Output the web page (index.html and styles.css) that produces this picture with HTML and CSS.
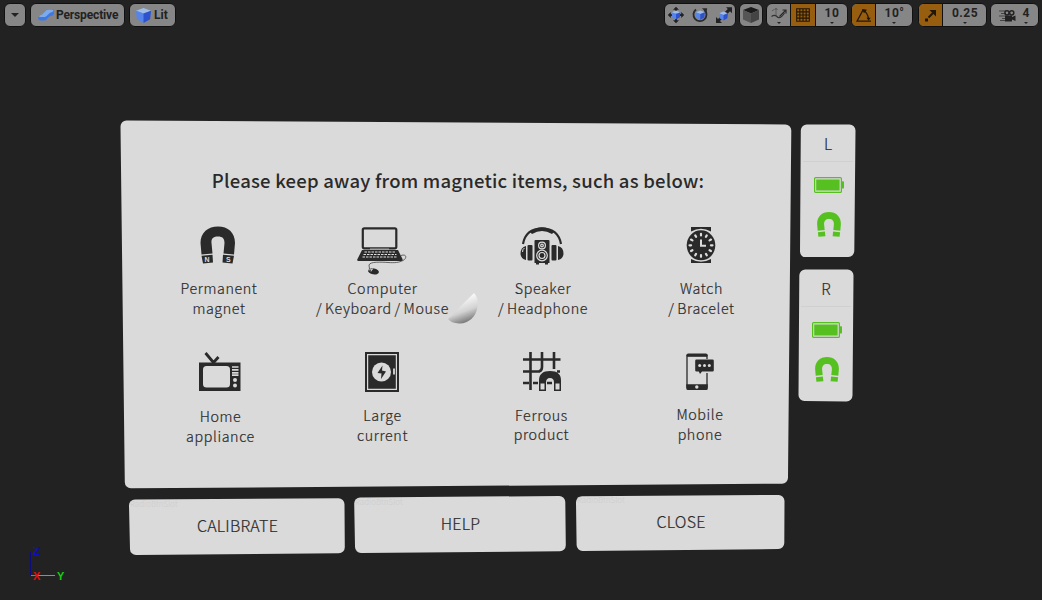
FILE: index.html
```html
<!DOCTYPE html>
<html lang="en">
<head>
<meta charset="utf-8">
<title>Viewport</title>
<link rel="stylesheet" href="styles.css">
</head>
<body>
<svg class="defs" aria-hidden="true">
  <defs>
    <linearGradient id="ball" x1="0.35" y1="0.25" x2="0.62" y2="1"><stop offset="0" stop-color="#f6f6f6"/><stop offset="0.5" stop-color="#d2d2d2"/><stop offset="1" stop-color="#6e6e6e"/></linearGradient>
    <symbol id="cube" viewBox="0 0 18 18"><path d="M1 4 9 1l8 3-8 3z" fill="#9dbdea"/><path d="M1 4l8 3v10l-7-4z" fill="#5684ea"/><path d="M17 4 9 7v10l7-4z" fill="#2d52d0"/></symbol>
    <symbol id="battery" viewBox="0 0 30 16"><rect x=".6" y=".6" width="26.8" height="14.8" rx="1" fill="none" stroke="#57c021" stroke-width="1.2"/><path d="M2.2 2.4h23.4v11.2H2.2zM28 4.3h1.2q.8 0 .8.8v5.6q0 .8-.8.8H28z" fill="#57c021"/></symbol>
    <symbol id="magnet" viewBox="0 0 24 25"><path d="M.7 18.8.1 12C0 4.6 5 .1 12 .1S24 4.6 23.9 12l-.6 6.800-7-.700.6-5.600c.2-3.600-1.600-5.600-4.900-5.600s-5.100 2-4.900 5.600l.6 5.600zM.9 20.200l7-.700.5 4.700-7 .600zM23.100 20.200l-7-.700-.5 4.700 7 .600z" fill="#57c021"/></symbol>
  </defs>
</svg>
<main class="viewport">
  <header class="toolbar">
    <div class="group menu"><span class="caret big"></span></div>
    <div class="group view"><svg width="18" height="14" viewBox="0 0 18 14"><path d="M1 9.500 5.500 6 9 2.500Q10 1 12 1h3q2 .3 2 2.500v2q-.3 2-3 2.500-2 .2-3 1.800Q9.500 12.500 7 12.500H4Q1 12.500 1 9.500z" fill="#3f78e2"/><path d="M2 8.500Q3 7 5 6.500l4-4Q10 1.400 12 1.400h3q1.500.5 1.500 1.600-1 1.300-3.500 1.700L9.500 8 8 9H3z" fill="#7faaea"/></svg><span>Perspective</span></div>
    <div class="group lit"><svg width="17" height="17"><use href="#cube"/></svg><span>Lit</span></div>
    <div class="spacer"></div>
    <div class="group tools">
      <svg width="18" height="18" viewBox="0 0 18 18"><path d="M9 .8l3 3H10v10.400h2l-3 3-3-3h2V3.800H6zM.8 9l3-3v2h10.400V6l3 3-3 3v-2H3.800v2z" fill="#222"/><svg x="4" y="4" width="10" height="10"><use href="#cube"/></svg></svg>
      <svg width="18" height="18" viewBox="0 0 18 18"><path d="M5 3.500A6.500 6.500 0 1 0 13.500 4" fill="none" stroke="#2a2a2a" stroke-width="1.800"/><path d="M11 2.200h5.200L15.400 7z" fill="#2a2a2a"/><svg x="4" y="4" width="10.500" height="10.500"><use href="#cube"/></svg></svg>
      <svg width="18" height="18" viewBox="0 0 18 18"><path d="M11 1.200H17v6l-2-2-3 3-2.200-2.200 3-3zM1 11v6h6l-2-2 2-2-2-2-2 2z" fill="#222"/><svg x="3.500" y="5" width="10" height="10"><use href="#cube"/></svg></svg>
    </div>
    <div class="group box"><svg width="18" height="18" viewBox="0 0 18 18"><path d="M1 4l8-3 8 3-8 3.500z" fill="#1b1b1b"/><path d="M1 4l8 3.500V17l-8-3.500z" fill="#555"/><path d="M17 4 9 7.500V17l8-3.500z" fill="#444"/></svg></div>
    <div class="group grid-snap">
      <div class="cell surface"><svg width="16" height="13" viewBox="0 0 16 13"><path d="M.5 9.500q3.500-2.500 6.500 1 3 1 6.500-4.500" fill="none" stroke="#333" stroke-width="1.200"/><path d="M5 8V1.500M3.500 3 5 1l1.500 2M1 4l2-1.500" fill="none" stroke="#5c5c5c"/><path d="M8.500 9.500 14.500 3.500M11.500 3H15v3.500" fill="none" stroke="#2a2a2a" stroke-width="1.200"/></svg><i class="caret"></i></div>
      <div class="cell on"><svg width="14" height="14" viewBox="0 0 14 14"><path d="M.7.700h12.600v12.600H.7zM3.850.7v12.600M7 .7v12.600M10.150.7v12.600M.7 3.850h12.600M.7 7h12.600M.7 10.150h12.600" fill="none" stroke="#221604" stroke-width="1.100"/></svg></div>
      <div class="cell value"><b>10</b><i class="caret"></i></div>
    </div>
    <div class="group rot">
      <div class="cell on"><svg width="16" height="15" viewBox="0 0 16 15"><path d="M7 2 1 13.200h14M7 2q5 3 5.500 9" fill="none" stroke="#221604" stroke-width="1.300"/><path d="M6 1l5 .8-3 3.400zM10.500 9.800h4.200l-2.100 3z" fill="#221604"/></svg></div>
      <div class="cell value"><b>10°</b><i class="caret"></i></div>
    </div>
    <div class="group scale">
      <div class="cell on"><svg width="13" height="13" viewBox="0 0 13 13"><path d="M1 9.500h3v3H1z" fill="#221604"/><path d="M4.500 8.500 9 4" stroke="#221604" stroke-width="2"/><path d="M5.500 1H12v6.500z" fill="#221604"/></svg></div>
      <div class="cell value"><b>0.25</b><i class="caret"></i></div>
    </div>
    <div class="group cam">
      <svg width="17" height="13" viewBox="0 0 17 13"><path d="M0 2h7M2 4.500h5M0 7h6M3 9.500h4M1 11.500h5" stroke="#444" stroke-width="1"/><path d="M6 6.500h7v1.500l3.500-1.500v5.500L13 10.500V12.500H6z" fill="#222"/><circle cx="8" cy="3.800" r="2.100" fill="none" stroke="#222" stroke-width="1.500"/><circle cx="12.700" cy="3.800" r="2.100" fill="none" stroke="#222" stroke-width="1.500"/></svg>
      <div class="value"><b>4</b><i class="caret"></i></div>
    </div>
  </header>

  <div class="scene">
    <div class="left">
      <section class="panel">
        <svg class="plate" viewBox="0 0 672 369"><path d="M6.500 6.500 665.300 10.500 662 357.700 10.800 362.300z"/></svg>
        <h1>Please keep away from magnetic items, such as below:</h1>
        <div class="row first">
          <figure class="f1">
            <svg width="36" height="40" viewBox="0 0 36 40"><path d="M1.500 28.500.5 17C.5 6.500 8 .5 18 .5S35 6.500 35 17l-1 11.500-10.500-1L24.500 17c0-4.500-2-6.500-6.500-6.500S11 12.500 11.500 17l1 10.500zM1.500 29.700l11-.9.500 7.700-10 1zM34 29.700l-11-.9-.5 7.700 10 1z" fill="#2a2a2a"/><text x="4.500" y="36">N</text><text x="26" y="36">S</text></svg>
            <figcaption>Permanent<br>magnet</figcaption>
          </figure>
          <figure>
            <svg class="laptop" width="52" height="50" viewBox="0 0 52 50"><rect x="6.800" y="2.300" width="33.500" height="20" rx="1.500" fill="none" stroke="#2a2a2a" stroke-width="2.200"/><path d="M6 24h36l4.500 9q.5 2-1 2h-43q-2 0-1-2z" fill="#2a2a2a"/><path d="M8.500 26h31M7.500 28.500h33M6.500 31h35" stroke="#ddd" stroke-width="1.200" stroke-dasharray="2.500 1"/><path d="M14 23h19" stroke="#ddd" stroke-width=".7"/><path d="M45 29.500c6-2 6 3 2 5s-8 2.500-15 2-18-1-19 2.500l.5 4" fill="none" stroke="#444" stroke-width=".8"/><ellipse cx="17.500" cy="45.500" rx="5.500" ry="3" transform="rotate(10 18 45.500)" fill="#2a2a2a"/><path d="M12.500 44l4-.500M16.500 42.500l-1.500 3" stroke="#ddd" stroke-width=".8"/></svg>
            <figcaption>Computer<br>/ Keyboard / Mouse</figcaption>
          </figure>
          <figure class="f3">
            <svg width="44" height="40" viewBox="0 0 44 40"><path d="M3 18C5 7 12 2.500 22 2.500S39 7 41 18" fill="none" stroke="#2a2a2a" stroke-width="2.200"/><path d="M10 6Q22-3.500 34 6l-2 2Q22 2 12 8z" fill="#2a2a2a"/><rect x="7.500" y="19" width="5" height="15.500" rx="1" fill="#2a2a2a"/><rect x="31.500" y="19" width="5" height="15.500" rx="1" fill="#2a2a2a"/><path d="M6 20v14q-5-1-5.500-6 0-7 5.500-8zM38 20v14q5-1 5.500-6 0-7-5.500-8z" fill="#2a2a2a"/><path d="M4.500 22q-2 1-2 4" fill="none" stroke="#ddd"/><path d="M15.500 14h13q1 0 1 1v22h-1.500v1.500h-3V37h-6v1.500h-3V37h-1.500V15q0-1 1-1z" fill="#2a2a2a"/><g fill="none" stroke="#ddd" stroke-width="1.200"><circle cx="22" cy="19.500" r="3.400"/><circle cx="22" cy="19.500" r="1.300"/><circle cx="22" cy="29.500" r="5.300"/><circle cx="22" cy="29.500" r="3"/></g></svg>
            <figcaption>Speaker<br>/ Headphone</figcaption>
          </figure>
          <figure>
            <svg width="30" height="40" viewBox="0 0 30 40"><path d="M5 1h20V5.500Q15 0 5 5.500zM5 37h20V33Q15 38.500 5 33z" fill="#2a2a2a"/><ellipse cx="15" cy="19.300" rx="14.300" ry="15" fill="#2a2a2a"/><g stroke="#ddd" stroke-width="2.200" stroke-linecap="round"><path id="tick" d="M15 7.800v1.600M15 29.200v1.600M3.500 19.300h1.600M24.900 19.300h1.600"/><use href="#tick" transform="rotate(30 15 19.300)"/><use href="#tick" transform="rotate(60 15 19.300)"/></g><path d="M15 13.500v6.300h5" fill="none" stroke="#ddd" stroke-width="2"/></svg>
            <figcaption>Watch<br>/ Bracelet</figcaption>
          </figure>
        </div>
        <div class="row second">
          <figure class="d1">
            <svg width="42" height="40" viewBox="0 0 42 40"><path d="M6.500 1l8 9.500 5-5.500" fill="none" stroke="#2a2a2a" stroke-width="2.800"/><path d="M0 10.500h41.500V39H0z" fill="#2a2a2a"/><rect x="4" y="14" width="27" height="21.500" rx="3.500" fill="#dadada"/><path d="M33 15h6.500M33 17.900h6.500M33 20.800h6.500M33 23.200h6.500" stroke="#dadada" stroke-width="1.700"/><circle cx="36" cy="28" r="2" fill="#dadada"/><circle cx="36" cy="33.500" r="2" fill="#dadada"/></svg>
            <figcaption>Home<br>appliance</figcaption>
          </figure>
          <figure class="d2">
            <svg width="34" height="40" viewBox="0 0 34 40"><path d="M0 0h34v40H0z" fill="#2a2a2a"/><path d="M2.600 2.700h28.800v34.600H2.600z" fill="none" stroke="#dadada" stroke-width="1.200"/><circle cx="16.500" cy="20" r="9.500" fill="#dadada"/><path d="M17.500 13.500 12.500 21l4 .5-.5 5.500 5-7.500-4-1z" fill="#2a2a2a"/><path d="M29 16.500v6" stroke="#dadada" stroke-width="1.800"/></svg>
            <figcaption>Large<br>current</figcaption>
          </figure>
          <figure class="d3">
            <svg width="38" height="40" viewBox="0 0 38 40"><path d="M7.500 0v38M19 0v15q0 3.500-3 4.500M31 0v17M0 7.500h37.500M0 19.500h17M34 19.500h3M0 31h6M10 31h5M24 31h5" fill="none" stroke="#2a2a2a" stroke-width="2.600"/><path d="M16 39V28.500q0-9.500 11-9.500T38 28.500v10.500h-7V30.500q0-4.500-4-4.500t-4 4.500v8.500z" fill="#2a2a2a"/><path d="M17.500 31.500h4v6h-4zM32.500 31.500h4v6h-4z" fill="#dadada"/></svg>
            <figcaption>Ferrous<br>product</figcaption>
          </figure>
          <figure class="d4">
            <svg width="28" height="40" viewBox="0 0 28 40"><path d="M1 4h20v31H1z" fill="#dadada" stroke="#2a2a2a" stroke-width="1.300"/><path d="M.3 3.500q0-2 2-2h17.500q2 0 2 2V4.200H.3zM.3 32.300h21.500v4.200q0 1.500-1.500 1.500H2q-1.700 0-1.700-1.500z" fill="#2a2a2a"/><circle cx="10.800" cy="35" r="1.700" fill="#dadada"/><path d="M8.500 7h20v14H8.500z" fill="#dadada"/><path d="M10.500 7.500H26.500q1.300 0 1.300 1.300v9.400q0 1.300-1.300 1.300H16L14 22l-1.200-2.500H10.500q-1.300 0-1.300-1.300V8.800q0-1.300 1.300-1.300z" fill="#2a2a2a"/><g fill="#dadada"><circle cx="13.700" cy="13.500" r="1.500"/><circle cx="18.500" cy="13.500" r="1.500"/><circle cx="23.300" cy="13.500" r="1.500"/></g></svg>
            <figcaption>Mobile<br>phone</figcaption>
          </figure>
        </div>
      </section>
      <div class="actions">
        <button class="b1"><svg class="plate" viewBox="0 0 216 60"><path d="M6 10.500 209.500 9.200 209.800 52.300 7 54z"/></svg><small>RadioBtnSlot</small><span>CALIBRATE</span></button>
        <button class="b2"><svg class="plate" viewBox="0 0 212 60"><path d="M6.200 8.500 205.300 7 205.800 50.300 7 52z"/></svg><small>RadioBtnSlot</small><span>HELP</span></button>
        <button class="b3"><svg class="plate" viewBox="0 0 209 60"><path d="M6 7.200 202.500 6 202.300 48 6.600 50z"/></svg><small>RadioBtnSlot</small><span>CLOSE</span></button>
      </div>
    </div>
    <aside class="right">
      <section class="hand">
        <svg class="plate" viewBox="0 0 56 133"><path d="M6.800 6.500 49.500 6.500 48.300 127 6 127.500z"/></svg>
        <h2>L</h2>
        <svg class="bat" width="30" height="16"><use href="#battery"/></svg>
        <svg class="mag" width="24" height="25"><use href="#magnet"/></svg>
      </section>
      <section class="hand r">
        <svg class="plate" viewBox="0 0 56 133"><path d="M7.300 6.500 49.500 6.500 48.500 126.500 6.500 126z"/></svg>
        <h2>R</h2>
        <svg class="bat" width="30" height="16"><use href="#battery"/></svg>
        <svg class="mag" width="24" height="25"><use href="#magnet"/></svg>
      </section>
    </aside>
  </div>

  <svg class="pointer" width="32" height="34" viewBox="0 0 32 34"><path d="M27 1Q31.500 5 30.500 15C29 25 21 32 12 31.500Q4 31 1 27z" fill="url(#ball)"/></svg>
  <svg class="axes" width="44" height="42" viewBox="0 0 44 42"><path d="M1.500 12v23" stroke="#0c0c7c"/><path d="M2 35.500h24" stroke="#18e018"/><path d="M2 35.500h8" stroke="#c86a18"/><text x="4" y="15" fill="#0d0dc8">Z</text><text x="4" y="40" fill="#e01010">X</text><text x="28" y="40" fill="#12d012">Y</text></svg>
</main>
</body>
</html>
```

FILE: styles.css
```css
* { box-sizing: border-box; }
body { margin: 0; background: #222; overflow: hidden; }
.defs { position: absolute; width: 0; height: 0; }
.viewport { position: relative; width: 1042px; height: 600px; background: #222; color: #2a2a2a; font-family: "Noto Sans CJK SC", "Noto Sans", sans-serif; }

.toolbar { display: flex; height: 30px; padding: 3px 3px 0 4px; font: 500 12px Roboto, sans-serif; color: #222; }
.group { display: flex; align-items: center; height: 24px; border: 1px solid #111; border-radius: 6px; background: #868686; overflow: hidden; flex: none; }
.menu { width: 22px; justify-content: center; margin-right: 4px; }
.view { width: 95px; padding-left: 6px; gap: 1px; margin-right: 4px; font-weight: 700; letter-spacing: -.15px; }
.lit { width: 47px; padding-left: 5px; gap: 2px; font-weight: 700; }
.spacer { flex: 1; }
.tools { width: 72px; padding: 0 1px; justify-content: space-between; margin-right: 3px; }
.tools > svg { margin: 0 1px; }
.box { width: 24px; justify-content: center; margin-right: 3px; }
.grid-snap { width: 82px; margin-right: 3px; }
.rot { width: 62px; margin-right: 5px; }
.scale { width: 69px; margin-right: 3px; }
.cam { width: 49px; padding: 0 8px; justify-content: space-between; }
.cell { display: flex; align-items: center; justify-content: center; height: 22px; width: 24px; }
.surface { flex-direction: column; width: 23px; gap: 2px; padding-top: 1px; }
.on { background: #985e10; border-right: 1px solid #111; }
.surface + .on { width: 26px; border-left: 1px solid #111; }
.value { display: flex; flex: 1; flex-direction: column; align-items: center; }
.cam .value { flex: none; }
.value b { font-size: 12px; line-height: 14px; letter-spacing: .5px; padding-left: 1px; margin-bottom: 2px; }
.caret { width: 0; height: 0; border: solid transparent; border-width: 2px 2px 0; border-top-color: #222; }
.caret.big { border-width: 4px 4px 0; border-top-color: #222; }

.scene { display: flex; padding: 90px 0 0 120px; }
.left { width: 672px; margin-right: 8px; }
.plate { position: absolute; inset: 0; width: 100%; height: 100%; z-index: -1; }
.plate path { fill: #dadada; stroke: #dadada; stroke-width: 12px; stroke-linejoin: round; }
.panel, .hand, .actions button { position: relative; z-index: 0; }
.panel { height: 369px; padding-top: 48px; }
h1 { margin: 0; padding-left: 4px; height: 25px; line-height: 25px; font-size: 18.5px; font-weight: 500; letter-spacing: .22px; text-align: center; white-space: nowrap; }
.row { display: grid; }
.first { grid-template-columns: 161px 166px 155px 162px; padding: 33px 0 0 18px; height: 158px; }
.second { grid-template-columns: 160px 164px 155px 162px; padding: 0 0 0 20px; }
figure { margin: 0; display: flex; flex-direction: column; align-items: center; }
figure svg { display: block; flex: none; }
figure text { font: 700 7px "Liberation Sans", sans-serif; fill: #ddd; }
.f1 > svg, .f3 > svg { margin-right: 2px; }
.laptop { margin: 0 1px -10px 0; }
figcaption { margin-top: 12px; padding-left: 1px; text-align: center; white-space: nowrap; font-size: 14.3px; font-weight: 300; -webkit-text-stroke: .2px #2a2a2a; line-height: 19.6px; letter-spacing: .6px; word-spacing: -1px; }
.second figure { padding-top: 1px; }
.second figcaption { margin-top: 13.4px; }
.second .d1 figcaption { margin-top: 14.4px; }
.second .d3 figcaption { margin-top: 12.8px; padding-left: 0; }
.second .d4 figcaption { margin-top: 12.3px; padding-left: 0; }

.actions { display: grid; grid-template-columns: 216px 212px 209px; column-gap: 9.500px; padding: 6px 0 0 9px; }
.actions button { height: 60px; padding: 0; border: 0; background: none; color: inherit; font: 300 16px "Noto Sans CJK SC", sans-serif; display: flex; flex-direction: column; align-items: center; }
.actions .b2 { margin-left: -.5px; margin-right: .5px; }
.actions small { align-self: flex-start; font-size: 8px; line-height: 10px; color: #cdcdcd; margin: 4px 0 0 1px; }
.actions span { line-height: 24px; margin-top: 4px; padding-left: 1px; letter-spacing: .2px; -webkit-text-stroke: .2px #2a2a2a; }
.actions .b2 small { margin-top: 2px; }
.actions .b3 small { margin-top: 0; }

.right { padding-top: 4px; }
.hand { width: 56px; height: 133px; display: flex; flex-direction: column; align-items: center; }
.hand.r { margin: 12px 0 0 -2px; }
h2 { margin: 0 0 15px; width: 50px; height: 38px; border-bottom: 1px solid #d0d0d0; text-align: center; font-size: 15.500px; line-height: 39px; font-weight: 300; -webkit-text-stroke: .2px #2a2a2a; }
.mag { margin: 19px 0 0 1px; }
.bat { margin-left: 2px; }

.pointer { position: absolute; left: 447px; top: 292px; }
.axes { position: absolute; left: 28.500px; top: 540px; }
.axes text { font: 700 11px "Liberation Sans", sans-serif; }
```
